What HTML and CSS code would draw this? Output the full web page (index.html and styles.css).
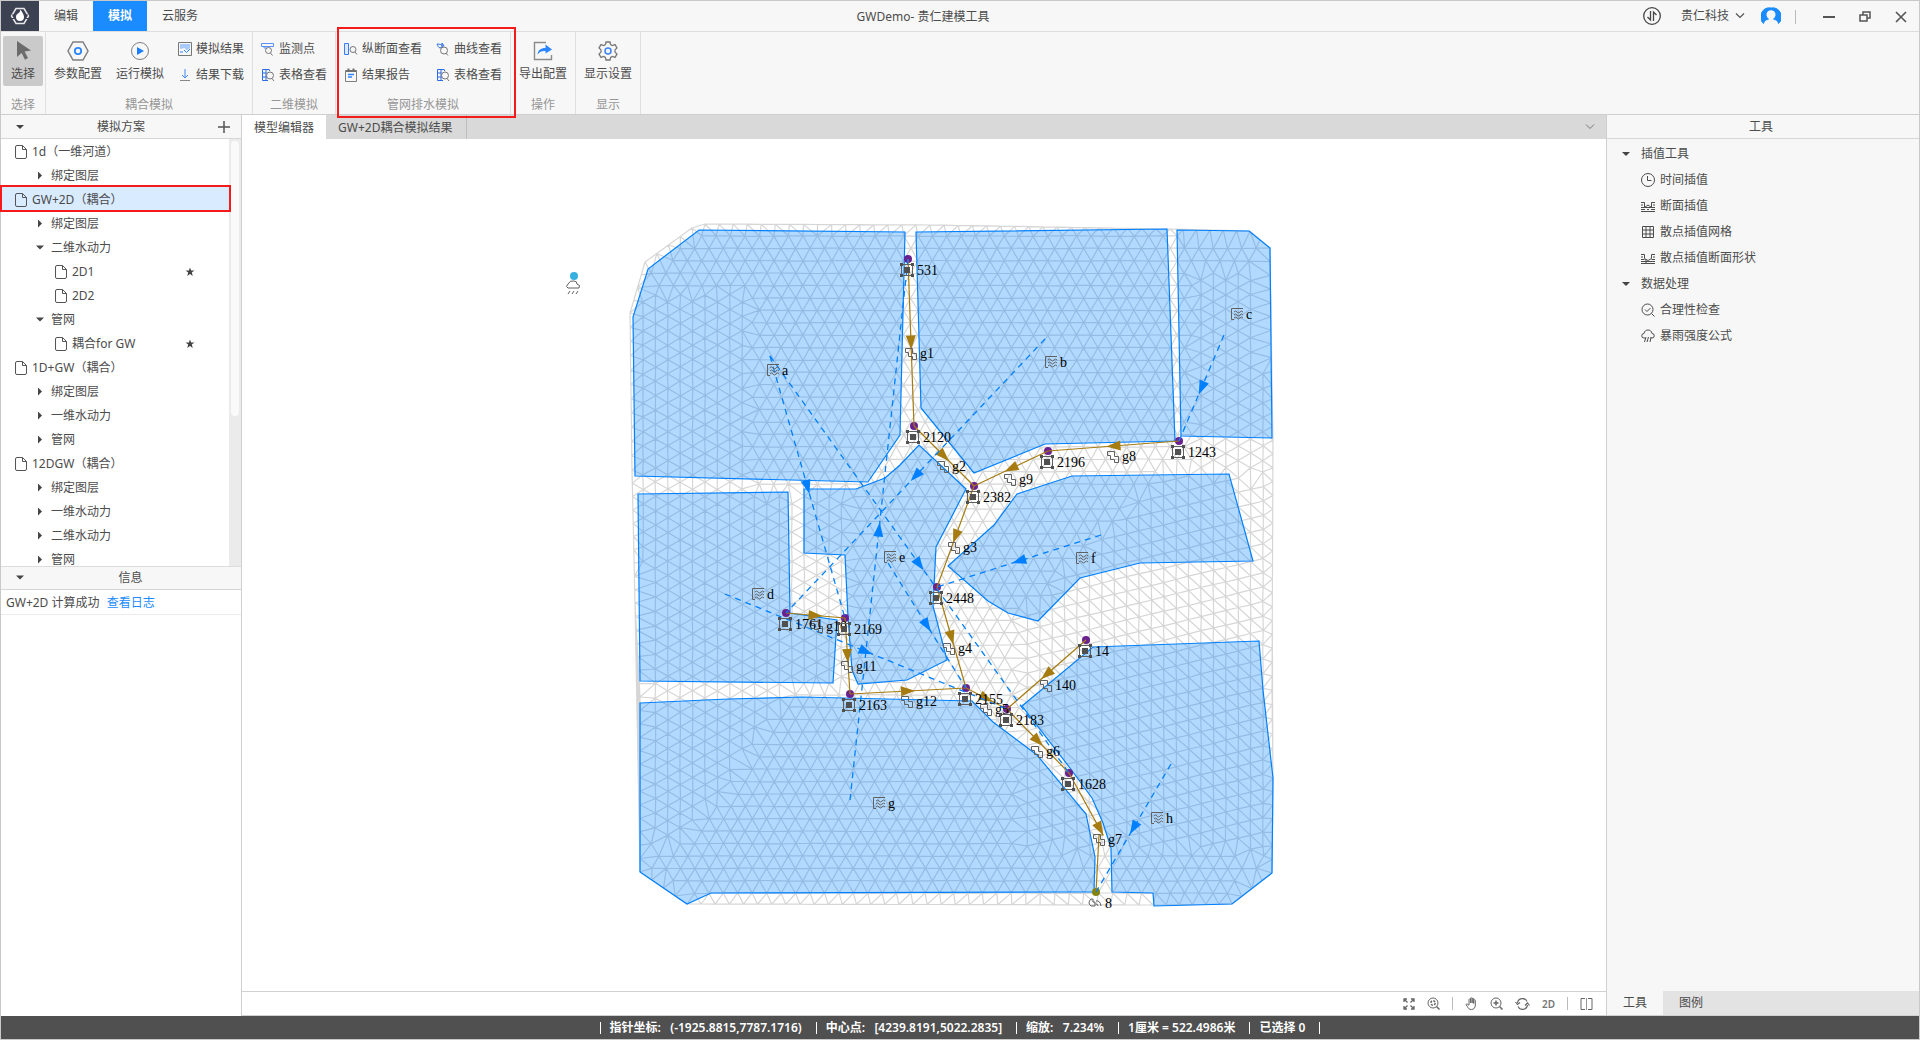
FILE: index.html
```html
<!DOCTYPE html>
<html lang="zh-CN">
<head>
<meta charset="utf-8">
<title>GWDemo- 贵仁建模工具</title>
<link rel="stylesheet" href="styles.css">
</head>
<body>
<svg class="defs" aria-hidden="true">
  <symbol id="i-file" viewBox="0 0 14 16"><path d="M8.500 1.500H3a1.500 1.500 0 0 0-1.500 1.500v10A1.500 1.500 0 0 0 3 14.500h8a1.500 1.500 0 0 0 1.500-1.500V5.500zV5.500h4" fill="none" stroke="#555"/></symbol>
  <symbol id="i-star" viewBox="0 0 10 10"><path d="M5 .5l1.100 3.100h3.300L6.800 5.600l1 3.400L5 7 2.200 9l1-3.400L.6 3.600h3.300z" fill="#444"/></symbol>
  <symbol id="i-table" viewBox="0 0 14 14"><path d="M8 1.500H1.500v11H7M1.500 5h4M1.500 9h4M5 1.500v11M8.500 1.500V3" fill="none" stroke="#2b6de8"/><circle cx="9" cy="7.500" r="3.500" fill="none" stroke="#777"/><path d="M11 10.500l2 2.500" stroke="#777"/></symbol>
</svg>
<div class="app">
  <header class="titlebar">
    <div class="logo"><svg width="20" height="18" viewBox="0 0 20 18"><path d="M6 1.500h8L18.500 9 14 16.500H6L1.500 9z" fill="none" stroke="#e8e8ec" stroke-width="1.500"/><path d="M2 11.500h16M2 8h16" stroke="#3d4252" stroke-width="1"/><path d="M10.500 2.500c2.500 4 3.500 5.500 3.500 7.500a4 4 0 0 1-8 0c0-1.500.5-2.500 2-3.500 1.500-1 2-2 2.500-4z" fill="#fff"/></svg></div>
    <nav class="menu">
      <button>编辑</button><button class="active">模拟</button><button>云服务</button>
    </nav>
    <h1>GWDemo- 贵仁建模工具</h1>
    <div class="account">
      <button class="sync" aria-label="同步"><svg width="18" height="18" viewBox="0 0 18 18" fill="none" stroke="#444"><circle cx="9" cy="9" r="8.300" stroke-width="1.300"/><path d="M7.500 4v9L4.500 10M10.500 14V5l3 3" stroke-width="1.300"/></svg></button>
      <button class="org">贵仁科技<svg width="10" height="6" viewBox="0 0 10 6"><path d="M1 .5l4 4 4-4" fill="none" stroke="#555" stroke-width="1.200"/></svg></button>
      <button aria-label="用户"><svg width="20" height="18" viewBox="0 0 20 18"><path d="M10 1a9 9 0 0 0-7.500 15.500C3 14 5 12.700 7.500 12a5 5 0 1 1 5 0c2.500.7 4.500 2 5 4.500A9 9 0 0 0 10 1z" fill="#1b8cff" stroke="#1b8cff"/></svg></button>
    </div>
    <div class="winbtns">
      <button aria-label="最小化"><svg width="12" height="12"><path d="M0 6h12" stroke="#555" stroke-width="2"/></svg></button>
      <button aria-label="还原"><svg width="12" height="12" fill="none" stroke="#555" stroke-width="1.500"><path d="M4 4V1h7v6H8M1 4h7v6H1z"/></svg></button>
      <button aria-label="关闭"><svg width="12" height="12"><path d="M1 1l10 10M11 1L1 11" stroke="#555" stroke-width="1.600"/></svg></button>
    </div>
  </header>

  <section class="ribbon">
    <div class="group g-select">
      <div class="tools"><button class="big on"><svg width="20" height="20" viewBox="0 0 20 20"><path d="M4 0l14 9.500-6.500 1 3.500 6.500-3 1.700-3.400-6.700L4 16z" fill="#6b6b6b"/></svg>选择</button></div>
      <p>选择</p>
    </div>
    <div class="group g-couple">
      <div class="tools">
        <button class="big"><svg width="22" height="20" viewBox="0 0 22 20" fill="none"><path d="M6 1h10l5 9-5 9H6l-5-9z" stroke="#808080" stroke-width="1.500"/><circle cx="11" cy="10" r="3.200" stroke="#2b85ff" stroke-width="1.800"/></svg>参数配置</button>
        <button class="big"><svg width="20" height="20" viewBox="0 0 20 20"><circle cx="10" cy="10" r="8.500" fill="none" stroke="#808080"/><path d="M7 6l7 4-7 4z" fill="#1b7dff"/></svg>运行模拟</button>
        <div class="pair">
          <button><svg width="14" height="14" viewBox="0 0 14 14" fill="none"><path d="M.5 .5h13v13H.5z" stroke="#777"/><path d="M2 2h10v4L9 8.500 6.500 6 2 7z" fill="#a9cbfb"/><path d="M6 8l2.500 2.500L12 7M2 10h3" stroke="#2b85ff"/></svg>模拟结果</button>
          <button><svg width="14" height="14" viewBox="0 0 14 14" fill="none"><path d="M7 1v9M4 7l3 3 3-3" stroke="#3b8bfa"/><path d="M2 12.500h10" stroke="#888"/></svg>结果下载</button>
        </div>
      </div>
      <p>耦合模拟</p>
    </div>
    <div class="group g-2d">
      <div class="tools">
        <div class="pair">
          <button><svg width="14" height="14" viewBox="0 0 14 14" fill="none"><path d="M.5 1.500h12v3H.5zM3 4.500V6h3" stroke="#5b92f5"/><circle cx="7.500" cy="8.500" r="3" stroke="#777"/><path d="M9.500 11l2 2.500" stroke="#777"/></svg>监测点</button>
          <button><svg width="14" height="14"><use href="#i-table"/></svg>表格查看</button>
        </div>
      </div>
      <p>二维模拟</p>
    </div>
    <div class="group g-pipe">
      <div class="tools">
        <div class="pair">
          <button><svg width="14" height="14" viewBox="0 0 14 14" fill="none"><path d="M.5 1.500h4v11h-4z" stroke="#3b7df6" fill="#dbe9ff"/><circle cx="9" cy="7.500" r="3" stroke="#777"/><path d="M11 10l2 2.500" stroke="#777"/></svg>纵断面查看</button>
          <button><svg width="14" height="14" viewBox="0 0 14 14" fill="none"><path d="M1.500 2.500h11v11h-11z" stroke="#808080"/><path d="M2 3h10M4.500 .5v3M9.500 .5v3" stroke="#707070" stroke-width="2"/><path d="M4 6.500h6M4 9h4" stroke="#2b85ff" stroke-width="1.500"/></svg>结果报告</button>
        </div>
        <div class="pair">
          <button><svg width="14" height="14" viewBox="0 0 14 14" fill="none"><path d="M1 2c3 0 6 1 6 3M1 2c1 2 1 3 3 4l2-1V1l2 3" stroke="#2b6de8"/><circle cx="8" cy="8.500" r="3.500" stroke="#777"/><path d="M10 11l2 2.500" stroke="#777"/></svg>曲线查看</button>
          <button><svg width="14" height="14"><use href="#i-table"/></svg>表格查看</button>
        </div>
      </div>
      <p>管网排水模拟</p>
    </div>
    <div class="group g-op">
      <div class="tools"><button class="big"><svg width="20" height="20" viewBox="0 0 20 20" fill="none"><path d="M13 1.500H1.500v17h17V14" stroke="#8a8a8a" stroke-width="1.400"/><path d="M4.500 14c.5-5 3-7 8-7V3.500L19 8.500l-6.500 4V10c-4 0-6 .5-8 4z" fill="#2b85ff"/></svg>导出配置</button></div>
      <p>操作</p>
    </div>
    <div class="group g-show">
      <div class="tools"><button class="big"><svg width="20" height="20" viewBox="0 0 20 20" fill="none"><path d="M8 1h4l.6 2.600 1.700.9L17 3.600l2 3.300-2 2v2.200l2 2-2 3.300-2.700-.9-1.700.9L12 19H8l-.6-2.600-1.700-.9-2.700.9-2-3.300 2-2V8.900l-2-2 2-3.300 2.700.9 1.700-.9z" stroke="#777" stroke-width="1.300"/><circle cx="10" cy="10" r="3" stroke="#3b82ff" stroke-width="1.500"/></svg>显示设置</button></div>
      <p>显示</p>
    </div>
    <div class="mark mark-ribbon"></div>
  </section>

  <div class="workspace">
    <aside class="side-left">
      <h2 class="bar"><i class="tri down"></i><span>模拟方案</span><button aria-label="新增"><svg width="12" height="12"><path d="M6 0v12M0 6h12" stroke="#555" stroke-width="1.500"/></svg></button></h2>
      <div class="treebox">
        <ul class="tree">
          <li class="l1"><svg><use href="#i-file"/></svg>1d（一维河道）</li>
          <li class="l2"><i class="tri closed"></i>绑定图层</li>
          <li class="l1 sel"><svg><use href="#i-file"/></svg>GW+2D（耦合）</li>
          <li class="l2"><i class="tri closed"></i>绑定图层</li>
          <li class="l2"><i class="tri down"></i>二维水动力</li>
          <li class="l3"><svg><use href="#i-file"/></svg>2D1<svg class="star"><use href="#i-star"/></svg></li>
          <li class="l3"><svg><use href="#i-file"/></svg>2D2</li>
          <li class="l2"><i class="tri down"></i>管网</li>
          <li class="l3"><svg><use href="#i-file"/></svg>耦合for GW<svg class="star"><use href="#i-star"/></svg></li>
          <li class="l1"><svg><use href="#i-file"/></svg>1D+GW（耦合）</li>
          <li class="l2"><i class="tri closed"></i>绑定图层</li>
          <li class="l2"><i class="tri closed"></i>一维水动力</li>
          <li class="l2"><i class="tri closed"></i>管网</li>
          <li class="l1"><svg><use href="#i-file"/></svg>12DGW（耦合）</li>
          <li class="l2"><i class="tri closed"></i>绑定图层</li>
          <li class="l2"><i class="tri closed"></i>一维水动力</li>
          <li class="l2"><i class="tri closed"></i>二维水动力</li>
          <li class="l2"><i class="tri closed"></i>管网</li>
        </ul>
        <div class="scroll"><div class="thumb"></div></div>
      </div>
      <h2 class="bar info-bar"><i class="tri down"></i><span>信息</span></h2>
      <div class="info"><p>GW+2D 计算成功 <a href="#log">查看日志</a></p></div>
    </aside>

    <main class="center">
      <nav class="tabs"><button class="active">模型编辑器</button><button>GW+2D耦合模拟结果</button><span class="more"><svg width="10" height="6" viewBox="0 0 10 6"><path d="M1 .5l4 4 4-4" fill="none" stroke="#777"/></svg></span></nav>
      <svg class="map" id="map" viewBox="242 139 1364 852" role="img" aria-label="管网模型"></svg>
      <div class="viewbar">
        <button aria-label="全图"><svg width="12" height="12" fill="none" stroke="#666" stroke-width="1.300"><path d="M1 4V1h3M1 1l3.500 3.500M8 1h3v3M11 1L7.500 4.500M1 8v3h3M1 11l3.500-3.500M11 8v3H8M11 11L7.500 7.500"/></svg></button>
        <button aria-label="缩放到选择"><svg width="13" height="13" fill="none" stroke="#666"><circle cx="6" cy="6" r="5"/><circle cx="6" cy="6" r="2.200" stroke-dasharray="2 1.200" stroke-width="1.500"/><path d="M9.500 9.500l3 3" stroke-width="1.500"/></svg></button>
        <i class="sep"></i>
        <button aria-label="平移"><svg width="13" height="13" viewBox="0 0 13 13" fill="none" stroke="#666"><path d="M4 8V2.500a.8.8 0 0 1 1.500 0V6M5.500 6V1.500a.8.8 0 0 1 1.600 0V6M7.100 6V2a.8.8 0 0 1 1.600 0v4.500M8.700 6.500V3.500a.8.8 0 0 1 1.600 0V8c0 3-1.500 4.500-4 4.500-2 0-3-1-4-3L1 7.500c.5-.8 1.500-.7 3 1"/></svg></button>
        <button aria-label="放大"><svg width="13" height="13" fill="none" stroke="#666"><circle cx="6" cy="6" r="5"/><path d="M3.500 6h5M6 3.500v5" stroke-width="1.500"/><path d="M9.500 9.500l3 3" stroke-width="1.500"/></svg></button>
        <button aria-label="刷新"><svg width="15" height="12" viewBox="0 0 15 12" fill="none" stroke="#666" stroke-width="1.200"><path d="M2.500 5a5 5 0 0 1 9.500-1.500M12.500 7A5 5 0 0 1 3 8.500M.5 4l2 2.500L5 4.500M10 7.500l2.500-2.500 2 2.500"/></svg></button>
        <button class="dim">2D</button>
        <i class="sep"></i>
        <button aria-label="分屏"><svg width="13" height="12" fill="none" stroke="#666"><path d="M5 .5H1v11h4M8 .5h4v11H8"/><path d="M6.500 0v12" stroke="#999"/></svg></button>
      </div>
    </main>

    <aside class="side-right">
      <h2 class="bar"><span>工具</span></h2>
      <ul class="toollist">
        <li class="head"><i class="tri down"></i>插值工具</li>
        <li><svg viewBox="0 0 14 14"><circle cx="7" cy="7" r="6.500"/><path d="M6.500 3v4.500h4"/></svg>时间插值</li>
        <li><svg viewBox="0 0 14 14"><path d="M0 3.500h3.500v5h7v-5H14M0 6h2M12 6h2M0 8.500h3.500L7 6l3.500 2.500H14M0 10.500h4M6 10.500h2M10 10.500h4M0 12.500h14"/></svg>断面插值</li>
        <li><svg viewBox="0 0 14 14"><path d="M1.500 1.500h11v11h-11zM5 1.500v11M9 1.500v11M1.500 5h11M1.500 9h11"/></svg>散点插值网格</li>
        <li><svg viewBox="0 0 14 14"><path d="M0 3.500h3.500v4L7 9.500l3.500-2v-4H14M0 6h2M12 6h2M0 8.500h3.500M10.500 8.500H14M0 10.500h14M0 12.500h14M5 8v5"/></svg>散点插值断面形状</li>
        <li class="head"><i class="tri down"></i>数据处理</li>
        <li><svg viewBox="0 0 14 14"><circle cx="6.500" cy="6.500" r="5.500"/><path d="M4 6.500l2 2L9.500 5M10.500 10.500l3 3"/></svg>合理性检查</li>
        <li><svg viewBox="0 0 14 14"><path d="M4 9H3a2.200 2.200 0 0 1 0-4.500C3.500 2 5 1 7 1s3.500 1 4 3.500A2.200 2.200 0 0 1 11 9h-1M5 8l-1.500 5M7.500 8L6 13M10 8l-1 5"/></svg>暴雨强度公式</li>
      </ul>
      <nav class="sidetabs"><button class="active">工具</button><button>图例</button></nav>
    </aside>
    <div class="mark mark-tree"></div>
  </div>

  <footer class="status">
    <span>指针坐标:&nbsp;&nbsp; (-1925.8815,7787.1716)</span><span>中心点:&nbsp;&nbsp; [4239.8191,5022.2835]</span><span>缩放:&nbsp;&nbsp; 7.234%</span><span>1厘米 = 522.4986米</span><span>已选择 0</span>
  </footer>
</div>
<script src="map.js"></script>
</body>
</html>
```
FILE: styles.css
```css
* { box-sizing: border-box; }
body, h1, h2, p, ul { margin: 0; padding: 0; }
body {
  font: 12px/16px "Noto Sans", "Noto Sans CJK SC", sans-serif;
  color: #4c4c4c;
  background: #f7f7f7;
}
ul { list-style: none; }
i { font-style: normal; }
button {
  font: inherit; color: inherit; background: none; border: 0; padding: 0; margin: 0;
}
svg { display: block; flex: none; }
.defs { position: absolute; width: 0; height: 0; }
.app {
  display: flex; flex-direction: column; height: 100vh;
  border: 1px solid #c9c9c9;
}

/* title bar */
.titlebar {
  display: flex; flex: none; height: 31px; align-items: stretch;
  border-bottom: 1px solid #dedede;
}
.logo {
  width: 38px; background: #3d4252;
  display: flex; align-items: center; justify-content: center;
}
.menu { display: flex; flex: 1; }
.menu button { padding: 0 15px; }
.menu .active { background: #1b8cff; color: #fff; font-weight: 700; }
.titlebar h1 { font-size: 12px; font-weight: 400; line-height: 31px; padding-left: 26px; }
.account { display: flex; flex: 1; justify-content: flex-end; align-items: center; gap: 16px; }
.sync { margin-right: 4px; }
.org { display: flex; align-items: center; gap: 6px; }
.winbtns {
  display: flex; align-items: center; gap: 24px;
  margin: 9px 12px 7px 14px; padding-left: 27px; border-left: 1px solid #bbb;
}

/* ribbon */
.ribbon { position: relative; display: flex; flex: none; height: 83px; border-bottom: 1px solid #cfcfcf; }
.group { display: flex; flex-direction: column; border-right: 1px solid #e0e0e0; }
.group p { color: #969696; text-align: center; line-height: 18px; }
.tools { flex: 1; display: flex; align-items: flex-start; padding: 4px 8px 0; gap: 14px; }
.g-select .tools { padding: 4px 2px 0; }
.big {
  display: flex; flex-direction: column; align-items: center; gap: 5px;
  height: 50px; padding-top: 5px;
}
.big.on { width: 40px; background: #cacaca; border-radius: 2px; }
.pair { display: flex; flex-direction: column; gap: 10px; padding-top: 5px; }
.pair button { display: flex; align-items: center; gap: 4px; }
.mark { position: absolute; border: 2px solid #f51b1b; pointer-events: none; }
.mark-ribbon { left: 336px; top: -5px; width: 179px; height: 91px; z-index: 2; }

/* panels */
.workspace { position: relative; flex: 1; display: flex; min-height: 0; }
.bar {
  display: flex; align-items: center; height: 24px; flex: none;
  font-size: 12px; font-weight: 400; border-bottom: 1px solid #d6d6d6;
  background: #f7f7f7; padding: 1px 11px 0 15px;
}
.bar span { flex: 1; text-align: center; }
.tri { width: 8px; height: 8px; flex: none; background: #444; }
.tri.down { clip-path: polygon(0 25%, 100% 25%, 50% 75%); }
.tri.closed { clip-path: polygon(25% 0, 75% 50%, 25% 100%); }
.side-left { width: 241px; flex: none; display: flex; flex-direction: column; background: #fff; border-right: 1px solid #cfcfcf; }
.info-bar { border-top: 1px solid #dcdcdc; padding: 0 4px 0 15px; }
.treebox { flex: 1; min-height: 0; display: flex; overflow: hidden; }
.tree { flex: 1; }
.tree li { display: flex; align-items: center; height: 24px; gap: 4px; padding-top: 1px; white-space: nowrap; }
.tree svg { width: 14px; height: 16px; }
.tree .l1 { padding-left: 13px; }
.tree .l2 { padding-left: 35px; gap: 7px; }
.tree .l3 { padding-left: 53px; }
.tree .sel { background: #d9ebff; }
.tree .star { width: 10px; height: 10px; margin: 0 34px 0 auto; }
.scroll { width: 12px; background: #ebebeb; padding: 2px; }
.thumb { height: 65%; border-radius: 4px; background: #fafafa; }
.mark-tree { left: -1px; top: 70px; width: 231px; height: 27px; }
.info { flex: 1; }
.info p { line-height: 23px; padding: 1px 5px 0; border-bottom: 1px solid #ebebeb; }
.info a { color: #1b8cff; text-decoration: none; margin-left: 4px; }

.center { flex: 1; min-width: 0; display: flex; flex-direction: column; background: #fff; }
.tabs { display: flex; flex: none; height: 24px; background: #d9d9d9; }
.tabs button { padding: 1px 14px 0 12px; border-right: 1px solid #bdbdbd; }
.tabs .active { background: #fff; border: 0; padding-right: 12px; }
.tabs .more { margin: auto 11px auto auto; }
.map { flex: 1; min-height: 0; width: 100%; }
.viewbar {
  flex: none; height: 25px; display: flex; align-items: center; justify-content: flex-end;
  gap: 12px; padding-right: 13px; border-top: 1px solid #d0d0d0; border-bottom: 1px solid #d0d0d0;
}
.sep { width: 1px; height: 13px; background: #bbb; }
.dim { font-size: 10px; font-weight: 600; color: #777; }

.side-right { width: 313px; flex: none; display: flex; flex-direction: column; border-left: 1px solid #cfcfcf; }
.side-right .bar { padding: 1px 15px 0 11px; }
.toollist { flex: 1; padding-top: 2px; }
.toollist li { display: flex; align-items: center; gap: 5px; height: 26px; padding-left: 34px; }
.toollist .head { padding-left: 15px; gap: 11px; }
.toollist svg { width: 14px; height: 14px; fill: none; stroke: #4c4c4c; }
.sidetabs { display: flex; height: 25px; background: #e3e3e3; border-bottom: 1px solid #d0d0d0; }
.sidetabs button { padding: 0 16px; }
.sidetabs .active { background: #f7f7f7; }

/* status line */
.status {
  flex: none; height: 23px; background: #505050; color: #fff; font-weight: 600;
  display: flex; justify-content: center; align-items: center; white-space: nowrap;
}
.status span { border-left: 1px solid #fff; line-height: 12px; padding: 0 14px 0 9px; }
.status span:last-child { border-right: 1px solid #fff; }

/* model map */
.mesh { fill: none; stroke: #d6d6d6; stroke-width: 1.2; }
.area { fill: #0080ff; fill-opacity: .3; stroke: #0080ff; stroke-width: 1.2; }
.pipe { fill: none; stroke: #a67c10; stroke-width: 1.2; }
.flow { fill: none; stroke: #0080ff; stroke-width: 1.3; stroke-dasharray: 6 5; }
.pipe-head { fill: #a67c10; }
.flow-head { fill: #0080ff; }
.node { fill: #6b2090; }
.outfall { fill: #868210; }
.glyph { fill: none; stroke: #606060; }
.solid { fill: #505050; }
.map text { font: 14px "Liberation Serif", serif; fill: #000; }
```
FILE: map.js
```js
const NS = "http://www.w3.org/2000/svg";
const map = document.getElementById("map");
function add(tag, attrs, text) {
  const el = document.createElementNS(NS, tag);
  for (const k in attrs) el.setAttribute(k, attrs[k]);
  if (text) el.textContent = text;
  map.appendChild(el);
}

/* triangulated surface */
const outline = [[705,224],[930,225],[1170,229],[1250,231],[1270,248],[1273,440],[1272,690],[1273,778],[1272,873],[1232,904],[1153,905],[687,904],[640,872],[640,697],[635,603],[632,470],[630,313],[645,262],[692,228]];
function inside(x, y) {
  let c = false;
  for (let i = 0, j = outline.length - 1; i < outline.length; j = i++) {
    const [a, b] = outline[i], [p, q] = outline[j];
    if ((b > y) !== (q > y) && x < (p - a) * (y - b) / (q - b) + a) c = !c;
  }
  return c;
}
function zone(x, y) {
  if (x > 1020 && y > 470 && y < 850 && x + y > 1640) return 2;
  if (x > 1195 && y > 270 && y <= 470) return 1;
  if (x < 745 && y > 290 && y < 490) return 1;
  if (x < 850 && y >= 490 && y < 690) return 1;
  if (x < 790 - (y - 690) * .7 && y >= 690 && y < 840) return 1;
  return 0;
}
const pts = [];
function put(x, y, gap) {
  for (const p of pts) if ((p[0] - x) ** 2 + (p[1] - y) ** 2 < gap * gap) return;
  const n = pts.length;
  pts.push([x + Math.sin(n * 12.9) * .3, y + Math.sin(n * 7.3) * .3]);
}
outline.forEach((a, i) => {
  const b = outline[(i + 1) % outline.length];
  const n = Math.max(1, Math.round(Math.hypot(b[0] - a[0], b[1] - a[1]) / 14));
  for (let k = 0; k < n; k++) pts.push([a[0] + (b[0] - a[0]) * k / n, a[1] + (b[1] - a[1]) * k / n]);
});
for (let i = 0; i < 56; i++) for (let j = 0; j < 56; j++) {
  let x = 630 + j * 14.4 + (i % 2) * 7.2, y = 236 + i * 12.4;
  if (inside(x, y) && zone(x, y) === 0) put(x, y, 9);
  x = 643 + j * 12.4; y = 230 + i * 14.4 + (j % 2) * 7.2;
  if (inside(x, y) && zone(x, y) === 1) put(x, y, 9);
  x = 643 + j * 12.4; y = 230 + i * 14.4 + ((1400 - j * 3) % 14.4);
  if (inside(x, y) && zone(x, y) === 2) put(x, y, 9);
}
function tri(a, b, c) {
  const [ax, ay] = pts[a], [bx, by] = pts[b], [cx, cy] = pts[c];
  const d = 2 * (ax * (by - cy) + bx * (cy - ay) + cx * (ay - by));
  const A = ax * ax + ay * ay, B = bx * bx + by * by, C = cx * cx + cy * cy;
  const x = (A * (by - cy) + B * (cy - ay) + C * (ay - by)) / d;
  const y = (A * (cx - bx) + B * (ax - cx) + C * (bx - ax)) / d;
  return { v: [a, b, c], x, y, r: (ax - x) ** 2 + (ay - y) ** 2 };
}
const count = pts.length;
pts.push([-9000, -9000], [12000, -9000], [900, 15000]);
let tris = [tri(count, count + 1, count + 2)];
for (let n = 0; n < count; n++) {
  const [x, y] = pts[n], edges = new Map(), keep = [];
  for (const t of tris) {
    if ((t.x - x) ** 2 + (t.y - y) ** 2 < t.r) {
      for (let k = 0; k < 3; k++) {
        const a = t.v[k], b = t.v[(k + 1) % 3], key = Math.min(a, b) * 10000 + Math.max(a, b);
        if (edges.has(key)) edges.delete(key); else edges.set(key, [a, b]);
      }
    } else keep.push(t);
  }
  for (const [a, b] of edges.values()) keep.push(tri(a, b, n));
  tris = keep;
}
const seen = new Set();
let mesh = "";
for (const t of tris) {
  if (Math.max(...t.v) >= count) continue;
  for (let k = 0; k < 3; k++) {
    const a = t.v[k], b = t.v[(k + 1) % 3], key = Math.min(a, b) * 10000 + Math.max(a, b);
    if (seen.has(key)) continue;
    seen.add(key);
    mesh += "M" + pts[a].map(v => v.toFixed(1)) + "L" + pts[b].map(v => v.toFixed(1));
  }
}
add("path", { class: "mesh", d: mesh });

/* catchment areas */
[
  "699,230 905,232 900,435 868,482 635,476 633,317 648,269",
  "916,232 1167,229 1175,441 1045,444 974,473 921,408",
  "1177,230 1249,231 1270,248 1272,438 1181,436",
  "638,494 788,492 790,613 837,620 833,683 640,681",
  "804,489 856,489 885,478 900,465 919,445 966,489 936,547 933,606 947,660 907,680 858,684 852,670 848,617 845,555 804,553",
  "948,566 994,525 1017,494 1072,476 1229,474 1253,561 1140,563 1080,578 1038,621 1008,613 988,601",
  "640,703 728,699 802,697 972,701 993,722 1037,755 1086,814 1095,857 1094,892 711,893 687,904 640,872",
  "1022,706 1093,647 1259,641 1263,690 1273,778 1272,873 1232,904 1154,906 1153,893 1112,892 1111,848 1103,823 1092,798 1070,768"
].forEach(p => add("polygon", { class: "area", points: p }));

function head(cls, x, y, dx, dy) {
  const a = Math.atan2(dy, dx) * 180 / Math.PI;
  add("path", { class: cls, d: "M7 0L-7 -5V5z", transform: `translate(${x} ${y}) rotate(${a})` });
}
const nodes = {
  531: [908,259], 2120: [914,426], 2382: [974,486], 2196: [1048,451], 1243: [1179,441],
  2448: [937,587], 1761: [786,613], 2169: [845,618], 2163: [850,694], 2155: [966,688],
  2183: [1007,709], 14: [1086,640], 1628: [1069,773], 8: [1096,892]
};
const pipes = [
  ["g1",531,2120,911,354], ["g2",2120,2382,943,467], ["g8",1243,2196,1113,457], ["g9",2196,2382,1010,480],
  ["g3",2382,2448,954,548], ["g4",2448,2155,949,649], ["140",14,2183,1046,686], ["g5",2155,2183,986,710],
  ["g12",2163,2155,907,702], ["g11",2169,2163,847,667], ["g10",1761,2169,817,627], ["g6",2183,1628,1037,752]
];
const catchments = [
  ["a",773,370], ["b",1051,362], ["c",1237,314], ["d",758,594],
  ["e",890,557], ["f",1082,558], ["g",879,803], ["h",1157,818]
];

for (const id in nodes) {
  add("circle", { class: id === "8" ? "outfall" : "node", cx: nodes[id][0], cy: nodes[id][1], r: 4 });
}
for (const [, from, to] of pipes) {
  const [a, b] = nodes[from], [c, d] = nodes[to];
  add("path", { class: "pipe", d: `M${a} ${b}L${c} ${d}` });
  head("pipe-head", (a + c) / 2, (b + d) / 2, c - a, d - b);
}
add("path", { class: "pipe", d: "M1069 773L1103 835L1099 835L1096 892" });
head("pipe-head", 1100, 829, 31, 57);
pipes.push(["g7", 0, 0, 1099, 840]);

[
  [770,356,845,618], [770,356,1069,773], [1045,339,786,613], [1224,335,1179,441], [725,594,1007,709],
  [888,563,966,688], [1101,535,937,587], [850,800,908,259], [1171,764,1096,892]
].forEach(([a, b, c, d]) => {
  add("path", { class: "flow", d: `M${a} ${b}L${c} ${d}` });
  head("flow-head", (a + c) / 2, (b + d) / 2, c - a, d - b);
});

for (const [id, , , x, y] of pipes) {
  add("path", { class: "glyph", d: "M-5.500 -5.500H1.500V-.5H5.500V5.500H1.500V2.500H-2.500V-1.500H-5.500z", transform: `translate(${x} ${y})` });
  add("text", { x: x + 9, y: y + 4 }, id);
}
for (const [id, x, y] of catchments) {
  add("path", { class: "glyph", d: "M6 -5.500H-5.500V5.500H-3M-3 -2q1.500 -2 3 0t3 0 3 0M-3 1q1.500 -2 3 0t3 0 3 0M-3 4q1.500 -2 3 0t3 0 3 0", transform: `translate(${x} ${y})` });
  add("text", { x: x + 9, y: y + 5 }, id);
}
for (const id in nodes) {
  const x = nodes[id][0] - 1, y = nodes[id][1] + 11;
  if (id === "8") {
    add("path", { class: "glyph", d: "M-2 -4H-4Q-8 0 -4 3H0V-1H-2zM1 -2q4 -1 5 5M1 1q2 0 2 2", transform: `translate(${x} ${y})` });
  } else {
    add("path", { class: "glyph", d: "M-5.500 -5.500H5.500V5.500H-5.500z", transform: `translate(${x} ${y})` });
    add("path", { class: "solid", d: "M-7 -7h3v3h-3zM4 -7h3v3h-3zM-7 4h3v3h-3zM4 4h3v3h-3zM-3 -3h6v6h-6z", transform: `translate(${x} ${y})` });
  }
  add("text", { x: x + 10, y: y + 5 }, id);
}

/* rain gauge */
add("circle", { cx: 574, cy: 276, r: 4, fill: "#36b0e0" });
add("path", { class: "glyph", d: "M569 288H568Q565 287 568 284Q570 280 574 281Q577 281 577 284Q581 285 579 288H569M570 291l-2 3M574 291l-2 3M578 291l-2 3" });
```
